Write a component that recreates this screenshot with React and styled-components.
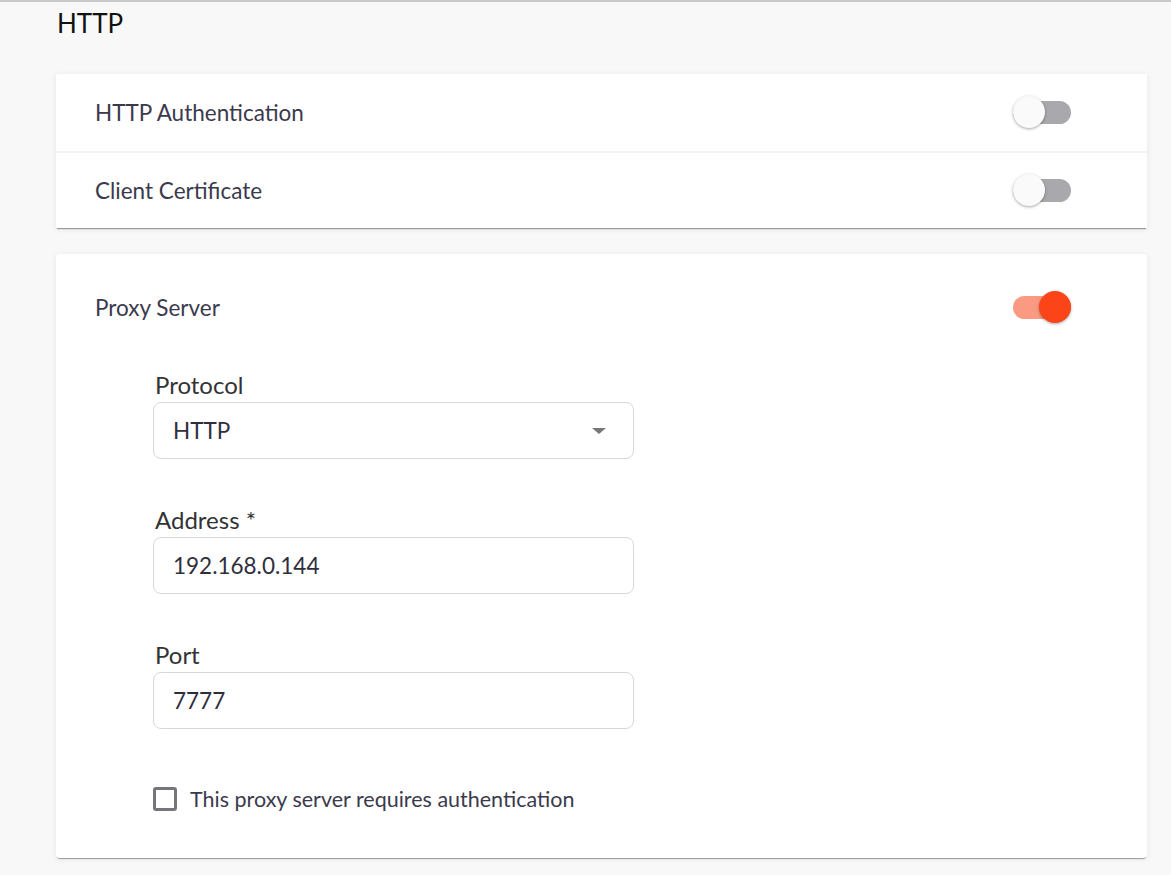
import React, { useState } from "react";
import styled, { createGlobalStyle } from "styled-components";

const GlobalStyle = createGlobalStyle`
  html, body {
    margin: 0;
    padding: 0;
    background: #f8f8f8;
  }
  body {
    font-family: "Lato", "Open Sans", sans-serif;
  }
`;

const Page = styled.div`
  border-top: 2px solid #c9c9c9;
  padding: 0 24px 16px 56px;
  min-height: 873px;
  box-sizing: border-box;
`;

const Title = styled.h1`
  margin: 6px 0 0 1px;
  font-size: 26px;
  font-weight: 400;
  line-height: 30px;
  color: #111;
`;

const Card = styled.section`
  background: #fff;
  border-radius: ${(p) => (p.rounded ? "4px" : "0")};
  box-shadow: 0 2px 1px -1px rgba(0, 0, 0, 0.35), 0 1px 6px rgba(0, 0, 0, 0.08);
  margin-top: ${(p) => p.top}px;
`;

const Row = styled.div`
  display: flex;
  align-items: center;
  justify-content: space-between;
  height: ${(p) => p.h || 77}px;
  padding: 0 76px 0 39px;
  border-top: ${(p) => (p.divided ? "2px solid #f3f3f3" : "none")};
  box-sizing: border-box;
`;

const RowLabel = styled.span`
  font-size: 22.5px;
  color: #3b3a4d;
`;

const Track = styled.button`
  position: relative;
  width: 58px;
  height: 23px;
  border: none;
  padding: 0;
  border-radius: 12px;
  cursor: pointer;
  background: ${(p) => (p.on ? "#fb9a82" : "#a9a8ad")};
`;

const Knob = styled.span`
  position: absolute;
  top: -5px;
  left: ${(p) => (p.on ? "26px" : "0")};
  width: 32px;
  height: 32px;
  border-radius: 50%;
  background: ${(p) => (p.on ? "#fb4417" : "#fafafa")};
  box-shadow: 0 1px 3px rgba(0, 0, 0, 0.35);
`;

const Toggle = ({ on, onClick }) => (
  <Track on={on} onClick={onClick}>
    <Knob on={on} />
  </Track>
);

const Form = styled.div`
  display: flex;
  flex-direction: column;
  gap: 46px;
  padding: 10px 0 47px 97px;
`;

const Field = styled.div`
  display: flex;
  flex-direction: column;
  gap: 2px;
  width: 481px;
`;

const FieldLabel = styled.label`
  padding-left: 2px;
  font-size: 24px;
  line-height: 30px;
  color: #333;
`;

const Box = styled.div`
  display: flex;
  align-items: center;
  justify-content: space-between;
  height: 57px;
  box-sizing: border-box;
  border: 1px solid #d8d8d8;
  border-radius: 8px;
  padding: 0 27px 0 19px;
  font-size: 22.5px;
  color: #2f2e3d;
`;

const Caret = styled.span`
  width: 0;
  height: 0;
  border-left: 7px solid transparent;
  border-right: 7px solid transparent;
  border-top: 6px solid #777;
`;

const CheckRow = styled.label`
  display: flex;
  align-items: center;
  gap: 13px;
  margin-top: 12px;
  height: 24px;
  font-size: 21.5px;
  color: #3b3a4d;
  cursor: pointer;
`;

const CheckBox = styled.span`
  flex: none;
  width: 24px;
  height: 24px;
  box-sizing: border-box;
  border: 3px solid #76757e;
  border-radius: 3px;
`;

export default function App() {
  const [auth, setAuth] = useState(false);
  const [cert, setCert] = useState(false);
  const [proxy, setProxy] = useState(true);

  const fields = [
    { label: "Address *", value: "192.168.0.144" },
    { label: "Port", value: "7777" },
  ];

  return (
    <Page>
      <GlobalStyle />
      <Title>HTTP</Title>
      <Card top={36}>
        <Row>
          <RowLabel>HTTP Authentication</RowLabel>
          <Toggle on={auth} onClick={() => setAuth(!auth)} />
        </Row>
        <Row divided>
          <RowLabel>Client Certificate</RowLabel>
          <Toggle on={cert} onClick={() => setCert(!cert)} />
        </Row>
      </Card>
      <Card top={26} rounded>
        <Row h={106}>
          <RowLabel>Proxy Server</RowLabel>
          <Toggle on={proxy} onClick={() => setProxy(!proxy)} />
        </Row>
        <Form>
          <Field>
            <FieldLabel>Protocol</FieldLabel>
            <Box>
              HTTP
              <Caret />
            </Box>
          </Field>
          {fields.map((f) => (
            <Field key={f.label}>
              <FieldLabel>{f.label}</FieldLabel>
              <Box>{f.value}</Box>
            </Field>
          ))}
          <CheckRow>
            <CheckBox />
            This proxy server requires authentication
          </CheckRow>
        </Form>
      </Card>
    </Page>
  );
}
